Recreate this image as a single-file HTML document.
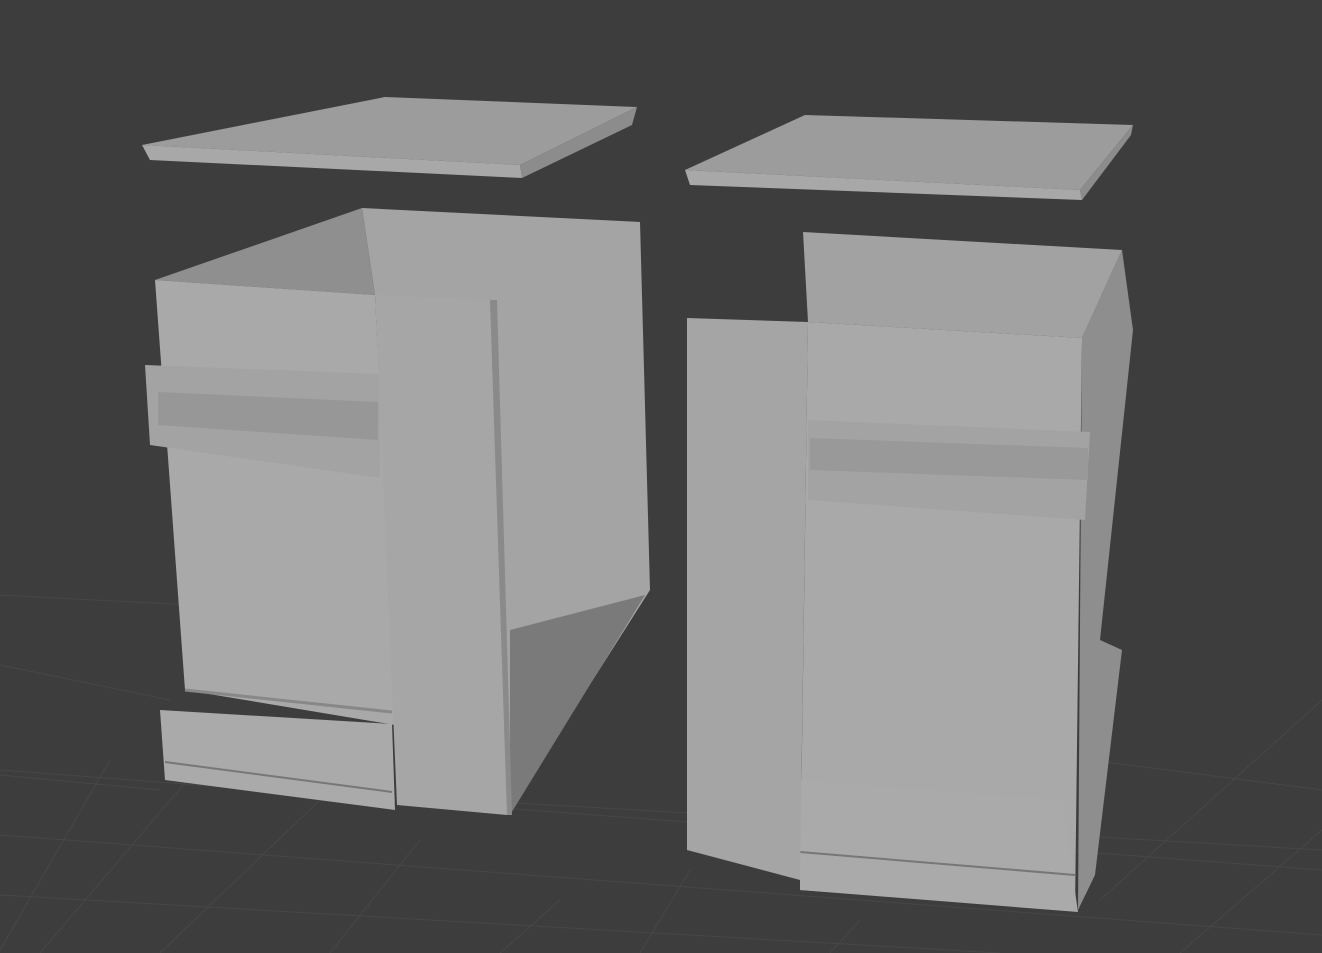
<!DOCTYPE html>
<html><head><style>html,body{margin:0;padding:0;background:#3d3d3d;overflow:hidden}svg{display:block}</style></head>
<body>
<svg width="1322" height="953" viewBox="0 0 1322 953" xmlns="http://www.w3.org/2000/svg">
<rect width="1322" height="953" fill="#3d3d3d"/>
<g stroke="#474747" stroke-width="1" fill="none">
<path d="M0 595 L190 605 M0 665 L170 700 M0 775 L160 790 M0 835 L1322 935 M0 895 L1000 953 M0 770 L1322 870 M380 795 L1322 850 M1090 760 L1322 790 M0 950 L110 760 M40 953 L230 730 M160 953 L320 800 M330 953 L420 840 M500 953 L560 900 M640 953 L690 870 M830 953 L860 920 M1180 953 L1322 830 M1100 900 L1322 700"/>
</g>
<!-- left pedestal -->
<polygon points="142,145 385,97 637,107 520,165" fill="#9c9c9c"/>
<polygon points="142,145 520,165 522,178 150,160" fill="#a8a8a8"/>
<polygon points="520,165 637,107 632,125 522,178" fill="#8c8c8c"/>
<polygon points="362,208 640,222 650,590 507,815 375,295" fill="#a4a4a4"/>
<polygon points="510,630 645,595 510,815" fill="#7a7a7a"/>
<polygon points="155,280 362,208 375,295" fill="#8f8f8f"/>
<polygon points="155,280 375,295 395,725 185,690" fill="#a9a9a9"/>
<polygon points="145,365 380,374 380,478 150,445" fill="#a3a3a3"/>
<polygon points="158,392 378,402 378,440 158,425" fill="#979797"/>
<polygon points="160,710 392,724 395,810 165,780" fill="#aaaaaa"/>
<line x1="165" y1="762" x2="392" y2="792" stroke="#777" stroke-width="2"/>
<line x1="185" y1="690" x2="392" y2="712" stroke="#888" stroke-width="3"/>
<polygon points="375,295 490,300 507,815 397,805" fill="#a6a6a6"/>
<polygon points="490,300 497,300 512,815 507,815" fill="#8a8a8a"/>
<!-- right pedestal -->
<polygon points="685,170 805,115 1133,125 1080,190" fill="#9c9c9c"/>
<polygon points="685,170 1080,190 1082,200 690,185" fill="#a8a8a8"/>
<polygon points="1080,190 1133,125 1131,135 1082,200" fill="#8c8c8c"/>
<polygon points="803,232 1122,250 1082,338 808,322" fill="#a2a2a2"/>
<polygon points="1082,338 1122,250 1133,330 1100,640 1122,650 1095,875 1078,910" fill="#8e8e8e"/>
<polygon points="808,322 1082,338 1075,910 800,890" fill="#a9a9a9"/>
<polygon points="808,420 1090,432 1085,520 808,500" fill="#a3a3a3"/>
<polygon points="810,438 1088,448 1088,480 810,470" fill="#999"/>
<polygon points="800,780 1062,800 1078,912 800,890" fill="#aaaaaa"/>
<line x1="800" y1="852" x2="1075" y2="875" stroke="#777" stroke-width="2"/>
<polygon points="687,318 808,322 800,880 687,850" fill="#a5a5a5"/>
</svg>
</body></html>
